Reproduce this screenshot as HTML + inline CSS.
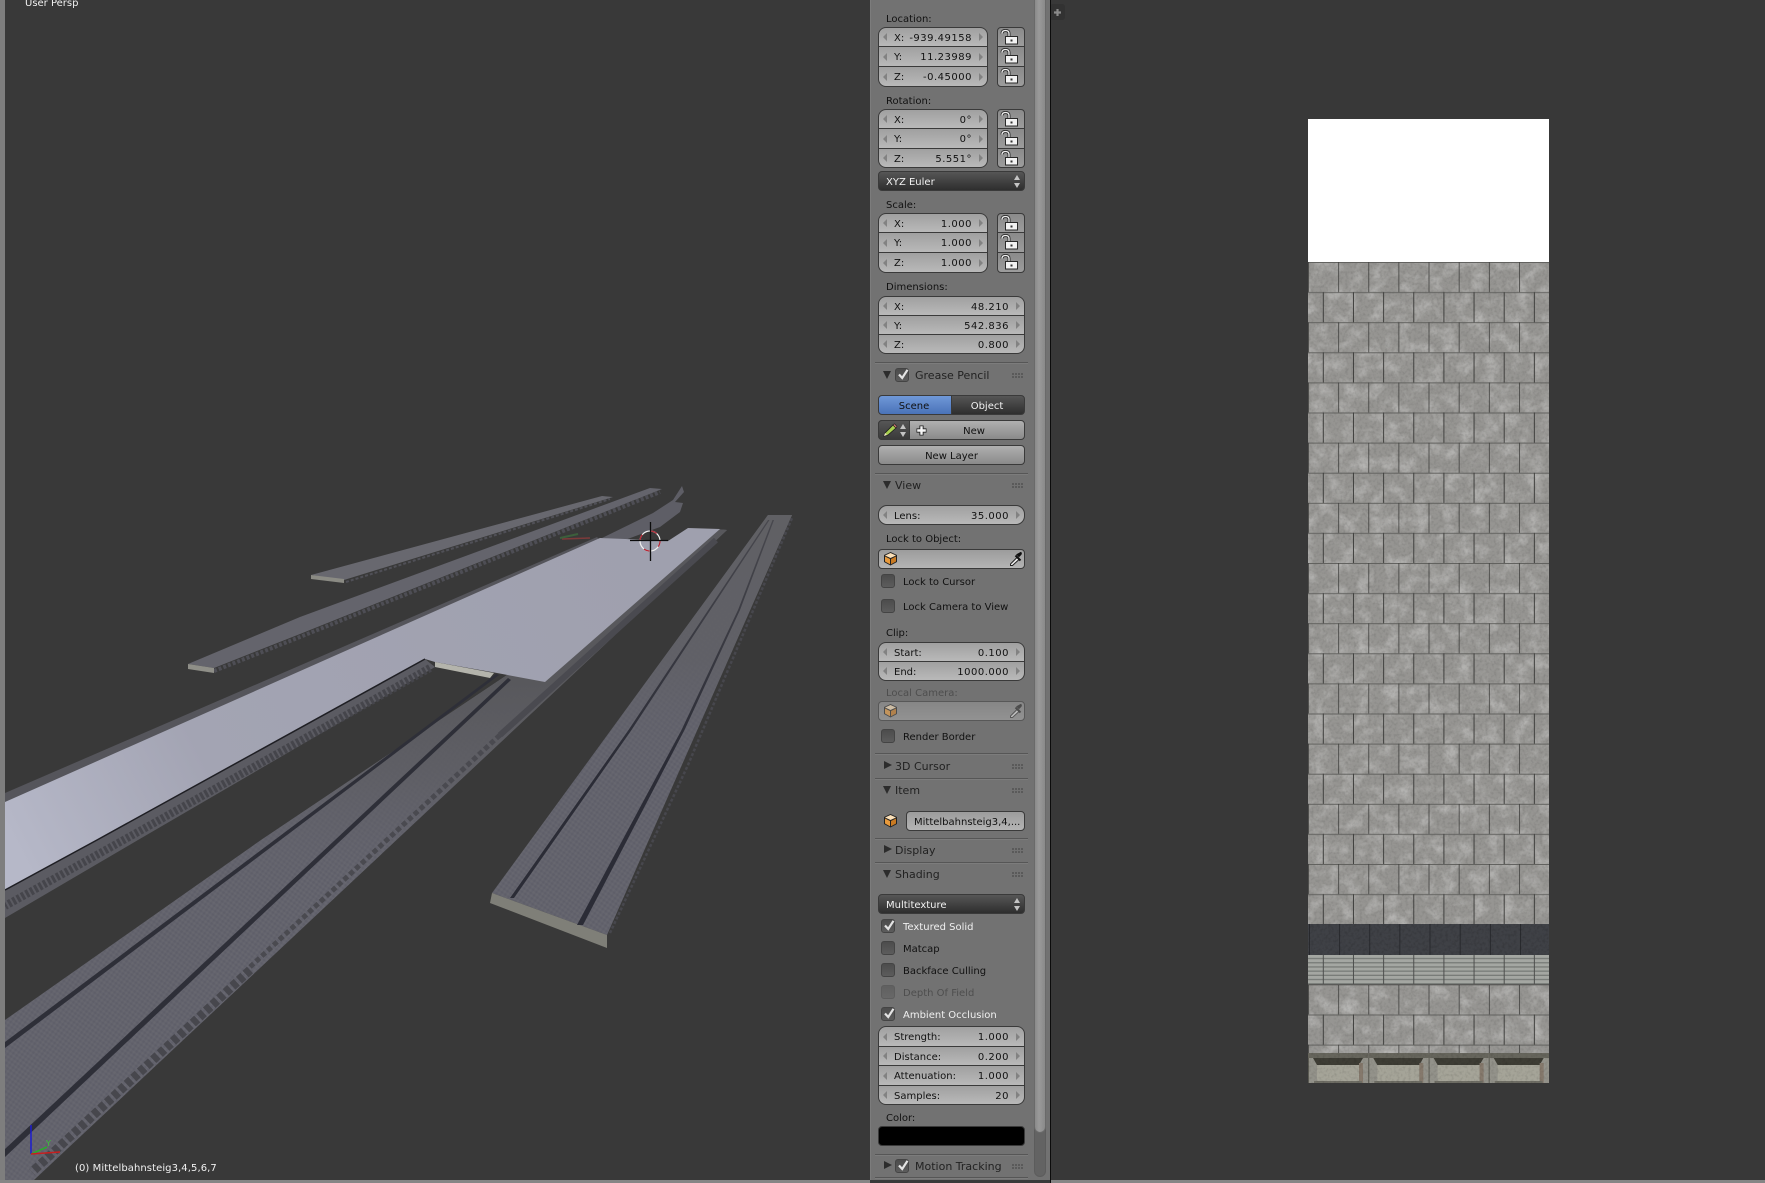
<!DOCTYPE html>
<html><head><meta charset="utf-8"><title>Blender</title>
<style>
html,body{margin:0;padding:0;background:#393939;width:1765px;height:1183px;overflow:hidden}
body{position:relative;font:10px "DejaVu Sans","Liberation Sans",sans-serif;color:#111}
.abs,.f,.l,.h,.c,.cb,.sep,.dots,.tri,.trr,.btn{position:absolute;box-sizing:border-box}
#panel{position:absolute;left:870px;top:0;width:180px;height:1180px;background:#727272;border-left:1px solid #7c7c7c}
.sep{left:875px;width:153px;height:2px;border-top:1px solid #565656;border-bottom:1px solid #7c7c7c}
.f{background:linear-gradient(#a0a0a0,#b9b9b9);border:1px solid #3a3a3a;line-height:18px;white-space:nowrap}
.sm{left:878px;width:110px}.lg{left:878px;width:147px}.lk{left:997px;width:28px;background:linear-gradient(#8a8a8a,#9c9c9c)}
.t{border-radius:8px 8px 0 0}.e{border-radius:0 0 8px 8px}.o{border-radius:9px}.t4{border-radius:4px 4px 0 0}.e4{border-radius:0 0 4px 4px}
.f u{position:absolute;left:15px;top:1.500px;text-decoration:none}
.f em{position:absolute;right:15px;top:1.500px;font-style:normal;letter-spacing:.5px}
.f s{position:absolute;top:50%;margin-top:-4px;border:4px solid transparent;width:0;height:0}
.f s.a{left:4px;border-right-color:#828282;border-left:0}
.f s.b{right:4px;border-left-color:#828282;border-right:0}
.f svg{position:absolute;left:-2px;top:-1px}
.l{left:886px;margin-top:2px;line-height:14px;white-space:nowrap;color:#111}
.h{margin-top:.5px;line-height:14px;font-size:11px;color:#222;white-space:nowrap}
.c{left:903px;margin-top:1px;line-height:14px;color:#111;white-space:nowrap}
.w{color:#f0f0f0}
.cb{left:881px;width:14px;height:14px;border:1px solid #444;border-radius:3px;background:linear-gradient(#4c4c4c,#5c5c5c)}
.cb svg{position:absolute;left:0;top:-1px}
.dots{left:1012px;width:11px;height:6px;background:radial-gradient(circle at 1px 1px,#4a4a4a 0.7px,transparent 1px) 0 0/3px 3px}
.tri{left:883px;width:0;height:0;border-left:4.500px solid transparent;border-right:4.500px solid transparent;border-top:8px solid #2c2c2c}
.trr{left:884px;width:0;height:0;border-top:4.500px solid transparent;border-bottom:4.500px solid transparent;border-left:8px solid #2c2c2c}
.btn{border:1px solid #3a3a3a;border-radius:4px;line-height:21px;text-align:center;white-space:nowrap}
.dark{background:linear-gradient(#565656,#2e2e2e);color:#f2f2f2;text-align:left;padding-left:7px}
.gr{background:linear-gradient(#b0b0b0,#8a8a8a);color:#111}
.fld{background:linear-gradient(#9c9c9c,#b4b4b4)}
.arrs{position:absolute;right:4px;top:3px;width:6px;height:13px}
.arrs:before,.arrs:after{content:"";position:absolute;left:0;border-left:3px solid transparent;border-right:3px solid transparent}
.arrs:before{top:0;border-bottom:5px solid #c4c4c4}.arrs:after{bottom:0;border-top:5px solid #c4c4c4}
</style></head><body>

<svg class="abs" style="left:0;top:0" width="870" height="1183" viewBox="0 0 870 1183">
<defs>
<linearGradient id="plat" gradientUnits="userSpaceOnUse" x1="640" y1="540" x2="20" y2="860"><stop offset="0" stop-color="#9fa0ae"/><stop offset=".7" stop-color="#a3a4b3"/><stop offset="1" stop-color="#b6b8c8"/></linearGradient>
<linearGradient id="fadeB" gradientUnits="userSpaceOnUse" x1="0" y1="680" x2="0" y2="880"><stop offset="0" stop-color="#58585c"/><stop offset=".5" stop-color="#5e5e64" stop-opacity=".8"/><stop offset="1" stop-color="#62626c" stop-opacity="0"/></linearGradient>
<linearGradient id="fadeR" gradientUnits="userSpaceOnUse" x1="0" y1="515" x2="0" y2="760"><stop offset="0" stop-color="#606064"/><stop offset=".6" stop-color="#606066" stop-opacity=".85"/><stop offset="1" stop-color="#62626c" stop-opacity="0"/></linearGradient>
<linearGradient id="lineR" gradientUnits="userSpaceOnUse" x1="0" y1="517" x2="0" y2="760"><stop offset="0" stop-color="#48484e"/><stop offset="1" stop-color="#2b2c36"/></linearGradient>
<pattern id="weave" width="4" height="4" patternUnits="userSpaceOnUse" patternTransform="rotate(35)"><rect width="4" height="4" fill="#63636d"/><rect width="2" height="2" fill="#67676f"/><rect x="2" y="2" width="2" height="2" fill="#5f5f69"/></pattern>
<g id="lk"><path d="M13 10V6.500Q13 3.500 9.500 3.500T6 6.500" fill="none" stroke="#2a2a2a" stroke-width="3"/><path d="M13 10V6.500Q13 3.500 9.500 3.500T6 6.500" fill="none" stroke="#f0f0f0" stroke-width="1.300"/><rect x="9.500" y="9.500" width="12" height="7.500" fill="#f2f2f2" stroke="#2a2a2a"/><rect x="14.500" y="12.500" width="2" height="2" fill="#333"/></g>
<g id="cube"><path d="M6.500 0L13 3V10L6.500 13.500L0 10V3Z" fill="#222"/><path d="M6.500 1L12 3.500L6.500 6L1 3.500Z" fill="#fbe0b8"/><path d="M1 4.500L6 7V12.300L1 9.500Z" fill="#e89a3c"/><path d="M7 7L12 4.500V9.500L7 12.300Z" fill="#c97a22"/></g>
<g id="drop"><path d="M1.500 12L8 5.500L10 7.500L3.500 13.500L1.500 13.500Z" fill="#eee" stroke="#222"/><path d="M8 2.500L10 4.500L12 2.500Q13 .5 11.500 .5L10 1.500Z" fill="#111" stroke="#111"/><path d="M6.500 3.500L11.500 8.500" stroke="#111" stroke-width="2"/></g>
<g id="chk"><path d="M3 6.500L6.200 10L11.500 1.800" fill="none" stroke="#e4e4e4" stroke-width="2.200"/></g>
</defs>

<!-- strip A -->
<polygon points="311,575 602,496 613,497 344,580" fill="#68686f"/>
<line x1="346" y1="582" x2="610" y2="499" stroke="#505057" stroke-width="2" stroke-dasharray="3 2"/>
<polygon points="311,575 344,579 344,583 311,579" fill="#8b8b84"/>
<!-- strip B -->
<polygon points="188,664 300,617 650,488 662,489 300,634 214,668" fill="#64646c"/>
<polyline points="214,671 300,637 660,492" fill="none" stroke="#4e4e55" stroke-width="4" stroke-dasharray="3 2"/>
<polygon points="188,664 214,668 214,673 188,669" fill="#8f8f88"/>
<!-- strip C -->
<polygon points="602,538 653,513 673,500 682,486 684,492 675,502 683,503 680,512 660,527 625,540" fill="#5e5e66"/>
<path d="M562 539L590 538" stroke="#7d3a3a" stroke-width="1.500"/><path d="M560 538L578 534" stroke="#3c5f3c" stroke-width="2"/>
<!-- upper platform edge -->
<polygon points="597,537 5,793 5,804 600,540" fill="#55555b"/>
<!-- central band -->
<polygon points="507,675 261,840 5,1020 5,1180 34,1180 727,530 716,529" fill="url(#weave)"/>
<polygon points="507,675 261,840 5,1020 5,1180 34,1180 727,530 716,529" fill="url(#fadeB)"/>
<line x1="716" y1="540" x2="500" y2="735" stroke="#4a4a50" stroke-width="6"/>
<polyline points="500,735 250,967" fill="none" stroke="#4a4a50" stroke-width="5" stroke-dasharray="5 3"/>
<polyline points="250,970 32,1172" fill="none" stroke="#47474d" stroke-width="9" stroke-dasharray="6 3"/>
<polygon points="496,674 499,675 5,1048 5,1042" fill="#2e2f38"/>
<polygon points="508,678 511,680 5,1157 5,1149" fill="#2e2f38"/>
<!-- left ledge -->
<polygon points="425,659 435,667 138,840 5,918 5,890 97,840" fill="#5b5b62"/>
<polyline points="430,668 138,832 5,906" fill="none" stroke="#45454b" stroke-width="8" stroke-dasharray="3 2"/>
<!-- platform -->
<polygon points="600,538 625,539 668,541 688,528 720,529 545,682 497,673 435,662 425,659 97,840 5,890 5,802" fill="url(#plat)"/>
<polyline points="425,659 97,840 5,890" fill="none" stroke="#1f1f24" stroke-width="1.500"/>
<polygon points="435,662 494,673 490,678 435,667" fill="#b4b4ac"/>
<!-- right strip -->
<polygon points="768,515 792,515 607,935 492,893" fill="url(#weave)"/>
<polygon points="768,515 792,515 684,760 589,760" fill="url(#fadeR)"/>
<polyline points="610,933 688,765 792,518" fill="none" stroke="#47474d" stroke-width="2.500" stroke-dasharray="3 2"/>
<polygon points="492,893 607,935 607,948 490,903" fill="#7f7f78"/>
<polygon points="510,898 628.500,730 768,520 769.500,520 631.500,730 514,898" fill="url(#lineR)"/>
<polygon points="577,925 681.500,730 738,610 772.500,520 774,520 740,610 684.500,730 583,925" fill="url(#lineR)"/>
<!-- cursor -->
<circle cx="650" cy="541" r="10" fill="none" stroke="#f0f0f0" stroke-width="1.200"/>
<circle cx="650" cy="541" r="10" fill="none" stroke="#b8212f" stroke-width="1.200" stroke-dasharray="6 10"/>
<path d="M630 540.500H668M650.500 522V561" stroke="#0c0c0c" stroke-width="1.300"/>
<!-- gizmo -->
<path d="M31 1154V1125" stroke="#1c1cd0" stroke-width="1.500"/>
<path d="M31 1154L47 1147" stroke="#25b325" stroke-width="1.500"/>
<path d="M31 1154L60 1152" stroke="#c81e1e" stroke-width="1.500"/>
<text x="46" y="1146" font-family="DejaVu Sans" font-size="8" fill="#3ac43a">Y</text>
<!-- texts -->
<text x="25" y="6" font-family="DejaVu Sans" font-size="10" fill="#f0f0f0">User Persp</text>
<text x="75" y="1171" font-family="DejaVu Sans" font-size="10" letter-spacing=".08" fill="#f0f0f0">(0) Mittelbahnsteig3,4,5,6,7</text>
<rect x="0" y="0" width="5" height="1183" fill="#7e7e7e"/>
<rect x="0" y="1180" width="870" height="3" fill="#858585"/>
</svg>

<!-- panel -->
<div id="panel"></div>
<div class="abs" style="left:1034px;top:-10px;width:12px;height:1187px;border-radius:6px;background:#636363;border:1px solid #5c5c5c;box-sizing:border-box"></div>
<div class="abs" style="left:1034px;top:-10px;width:12px;height:1143px;border-radius:6px;background:linear-gradient(90deg,#8a8a8a,#9a9a9a 40%,#8a8a8a);border:1px solid #6a6a6a;box-sizing:border-box"></div>
<div class="abs" style="left:1050px;top:0;width:1px;height:1183px;background:#0c0c0c"></div>
<div class="abs" style="left:870px;top:1180px;width:180px;height:3px;background:#3a3a3a"></div>

<div class="l" style="top:11px">Location:</div>
<div class="f sm t" style="top:27px;height:20px"><s class="a"></s><s class="b"></s><u>X:</u><em>-939.49158</em></div>
<div class="f sm" style="top:46px;height:21px"><s class="a"></s><s class="b"></s><u>Y:</u><em>11.23989</em></div>
<div class="f sm e" style="top:66px;height:21px"><s class="a"></s><s class="b"></s><u>Z:</u><em>-0.45000</em></div>
<div class="f lk t4" style="top:27px;height:20px"><svg width="28" height="20"><use href="#lk"/></svg></div>
<div class="f lk" style="top:46px;height:21px"><svg width="28" height="20"><use href="#lk"/></svg></div>
<div class="f lk e4" style="top:66px;height:21px"><svg width="28" height="20"><use href="#lk"/></svg></div>

<div class="l" style="top:93px">Rotation:</div>
<div class="f sm t" style="top:109px;height:20px"><s class="a"></s><s class="b"></s><u>X:</u><em>0°</em></div>
<div class="f sm" style="top:128px;height:21px"><s class="a"></s><s class="b"></s><u>Y:</u><em>0°</em></div>
<div class="f sm e" style="top:148px;height:20px"><s class="a"></s><s class="b"></s><u>Z:</u><em>5.551°</em></div>
<div class="f lk t4" style="top:109px;height:20px"><svg width="28" height="20"><use href="#lk"/></svg></div>
<div class="f lk" style="top:128px;height:21px"><svg width="28" height="20"><use href="#lk"/></svg></div>
<div class="f lk e4" style="top:148px;height:20px"><svg width="28" height="20"><use href="#lk"/></svg></div>

<div class="btn dark lg" style="top:171px;height:20px">XYZ Euler<span class="arrs"></span></div>

<div class="l" style="top:197px">Scale:</div>
<div class="f sm t" style="top:213px;height:20px"><s class="a"></s><s class="b"></s><u>X:</u><em>1.000</em></div>
<div class="f sm" style="top:232px;height:21px"><s class="a"></s><s class="b"></s><u>Y:</u><em>1.000</em></div>
<div class="f sm e" style="top:252px;height:21px"><s class="a"></s><s class="b"></s><u>Z:</u><em>1.000</em></div>
<div class="f lk t4" style="top:213px;height:20px"><svg width="28" height="20"><use href="#lk"/></svg></div>
<div class="f lk" style="top:232px;height:21px"><svg width="28" height="20"><use href="#lk"/></svg></div>
<div class="f lk e4" style="top:252px;height:21px"><svg width="28" height="20"><use href="#lk"/></svg></div>

<div class="l" style="top:279px">Dimensions:</div>
<div class="f lg t" style="top:296px;height:20px"><s class="a"></s><s class="b"></s><u>X:</u><em>48.210</em></div>
<div class="f lg" style="top:315px;height:20px"><s class="a"></s><s class="b"></s><u>Y:</u><em>542.836</em></div>
<div class="f lg e" style="top:334px;height:20px"><s class="a"></s><s class="b"></s><u>Z:</u><em>0.800</em></div>

<div class="sep" style="top:362px"></div>
<div class="tri" style="top:371px"></div>
<div class="cb" style="left:895px;top:368px"><svg width="14" height="14"><use href="#chk"/></svg></div>
<div class="h" style="left:915px;top:368px">Grease Pencil</div>
<div class="dots" style="top:373px"></div>

<div class="btn" style="left:878px;top:395px;width:74px;height:20px;border-radius:4px 0 0 4px;background:linear-gradient(#6f98d8,#4a73b8);color:#111;padding-right:2px">Scene</div>
<div class="btn" style="left:951px;top:395px;width:74px;height:20px;border-radius:0 4px 4px 0;background:linear-gradient(#565656,#2e2e2e);color:#f2f2f2;padding-right:2px">Object</div>

<div class="btn gr" style="left:878px;top:420px;width:147px;height:20px;padding-left:45px">New</div>
<div class="abs" style="left:878px;top:420px;width:32px;height:20px;border:1px solid #3a3a3a;border-radius:4px 0 0 4px;background:linear-gradient(#565656,#3a3a3a);box-sizing:border-box"><span class="arrs" style="right:3px"></span></div>
<svg class="abs" style="left:883px;top:423px" width="15" height="15"><path d="M1 13L2 10L10 2L13 5L5 12Z" fill="#a8d050" stroke="#1d1d1d" stroke-width=".8"/><path d="M10 2L11.500 .8L14 3.500L13 5Z" fill="#d97a7a" stroke="#1d1d1d" stroke-width=".6"/><path d="M1 13L2 10L4 12Z" fill="#f3e6c4"/></svg>
<svg class="abs" style="left:915px;top:424px" width="13" height="13"><path d="M6.500 1.500V11.500M1.500 6.500H11.500" stroke="#222" stroke-width="4.200"/><path d="M6.500 2.200V10.800M2.200 6.500H10.800" stroke="#f6f6f6" stroke-width="2.400"/></svg>

<div class="btn gr" style="left:878px;top:445px;width:147px;height:20px">New Layer</div>

<div class="sep" style="top:473px"></div>
<div class="tri" style="top:481px"></div>
<div class="h" style="left:895px;top:478px">View</div>
<div class="dots" style="top:483px"></div>

<div class="f lg o" style="top:505px;height:20px"><s class="a"></s><s class="b"></s><u>Lens:</u><em>35.000</em></div>
<div class="l" style="top:531px">Lock to Object:</div>
<div class="btn fld" style="left:878px;top:549px;width:147px;height:20px"></div>
<svg class="abs" style="left:884px;top:552px" width="14" height="15"><use href="#cube"/></svg>
<svg class="abs" style="left:1009px;top:552px" width="14" height="15"><use href="#drop"/></svg>

<div class="cb" style="top:574px"></div><div class="c" style="top:575px">Lock to Cursor</div>
<div class="cb" style="top:599px"></div><div class="c" style="top:600px">Lock Camera to View</div>

<div class="l" style="top:625px">Clip:</div>
<div class="f lg t" style="top:642px;height:20px"><s class="a"></s><s class="b"></s><u>Start:</u><em>0.100</em></div>
<div class="f lg e" style="top:661px;height:20px"><s class="a"></s><s class="b"></s><u>End:</u><em>1000.000</em></div>

<div class="l" style="top:685px;color:#4e4e4e">Local Camera:</div>
<div class="btn" style="left:878px;top:701px;width:147px;height:20px;background:linear-gradient(#868686,#929292);border-color:#585858"></div>
<svg class="abs" style="left:884px;top:704px;opacity:.6" width="14" height="15"><use href="#cube"/></svg>
<svg class="abs" style="left:1009px;top:704px;opacity:.5" width="14" height="15"><use href="#drop"/></svg>

<div class="cb" style="top:729px"></div><div class="c" style="top:730px">Render Border</div>

<div class="sep" style="top:753px"></div>
<div class="trr" style="top:761px"></div>
<div class="h" style="left:895px;top:759px">3D Cursor</div>
<div class="dots" style="top:764px"></div>

<div class="sep" style="top:778px"></div>
<div class="tri" style="top:786px"></div>
<div class="h" style="left:895px;top:783px">Item</div>
<div class="dots" style="top:788px"></div>
<svg class="abs" style="left:884px;top:814px" width="14" height="15"><use href="#cube"/></svg>
<div class="btn fld" style="left:906px;top:811px;width:119px;height:20px;text-align:left;padding-left:7px;overflow:hidden">Mittelbahnsteig3,4,...</div>

<div class="sep" style="top:838px"></div>
<div class="trr" style="top:845px"></div>
<div class="h" style="left:895px;top:843px">Display</div>
<div class="dots" style="top:848px"></div>

<div class="sep" style="top:862px"></div>
<div class="tri" style="top:870px"></div>
<div class="h" style="left:895px;top:867px">Shading</div>
<div class="dots" style="top:872px"></div>

<div class="btn dark lg" style="top:894px;height:20px">Multitexture<span class="arrs"></span></div>

<div class="cb" style="top:919px"><svg width="14" height="14"><use href="#chk"/></svg></div><div class="c w" style="top:920px">Textured Solid</div>
<div class="cb" style="top:941px"></div><div class="c" style="top:942px">Matcap</div>
<div class="cb" style="top:963px"></div><div class="c" style="top:964px">Backface Culling</div>
<div class="cb" style="top:985px;opacity:.45"></div><div class="c" style="top:986px;color:#4e4e4e">Depth Of Field</div>
<div class="cb" style="top:1007px"><svg width="14" height="14"><use href="#chk"/></svg></div><div class="c w" style="top:1008px">Ambient Occlusion</div>

<div class="f lg t" style="top:1026px;height:21px"><s class="a"></s><s class="b"></s><u>Strength:</u><em>1.000</em></div>
<div class="f lg" style="top:1046px;height:20px"><s class="a"></s><s class="b"></s><u>Distance:</u><em>0.200</em></div>
<div class="f lg" style="top:1065px;height:21px"><s class="a"></s><s class="b"></s><u>Attenuation:</u><em>1.000</em></div>
<div class="f lg e" style="top:1085px;height:20px"><s class="a"></s><s class="b"></s><u>Samples:</u><em>20</em></div>

<div class="l" style="top:1110px">Color:</div>
<div class="btn" style="left:878px;top:1126px;width:147px;height:20px;background:#000"></div>

<div class="sep" style="top:1154px"></div>
<div class="trr" style="top:1161px"></div>
<div class="cb" style="left:895px;top:1159px"><svg width="14" height="14"><use href="#chk"/></svg></div>
<div class="h" style="left:915px;top:1159px">Motion Tracking</div>
<div class="dots" style="top:1164px"></div>
<div class="sep" style="top:1177px"></div>

<!-- right area -->
<svg class="abs" style="left:1051px;top:0" width="714" height="1183" viewBox="1051 0 714 1183">
<defs>
<pattern id="joint" x="1308" y="262" width="30.150" height="60.200" patternUnits="userSpaceOnUse">
<path d="M0 .5H30.150M0 30.600H30.150" stroke="#62625f" stroke-width="1"/>
<path d="M.3 0V30.100M15.300 30.100V60.200" stroke="#3f3f3d" stroke-width="1"/>
</pattern>
<pattern id="jointV" x="1308" y="0" width="30.150" height="10" patternUnits="userSpaceOnUse"><path d="M15.300 0V10" stroke="#4c4e4c" stroke-width="1"/></pattern>
<pattern id="jointD" x="1309" y="0" width="30.150" height="10" patternUnits="userSpaceOnUse"><path d="M.3 0V10" stroke="#222327" stroke-width="1"/></pattern>
<pattern id="stripes" x="0" y="955" width="4" height="4.200" patternUnits="userSpaceOnUse"><rect width="4" height="4.200" fill="#a4a7a2"/><rect y="2.900" width="4" height="1.300" fill="#787b77"/></pattern>
<filter id="n" x="0" y="0" width="1" height="1"><feTurbulence type="fractalNoise" baseFrequency=".07" numOctaves="4" seed="5"/><feColorMatrix values="0 0 0 0 1 0 0 0 0 1 0 0 0 0 1 2.200 0 0 0 -.95"/></filter>
<filter id="nd" x="0" y="0" width="1" height="1"><feTurbulence type="fractalNoise" baseFrequency=".35" numOctaves="2" seed="9"/><feColorMatrix values="0 0 0 0 0 0 0 0 0 0 0 0 0 0 0 1.600 0 0 0 -.7"/></filter>
<g id="seg"><rect width="60.300" height="30" fill="#93928a"/><rect width="60.300" height="5" fill="#66655c"/><polygon points="5,5 55,5 51,12 9,12" fill="#3e3d35"/><rect x="9" y="12" width="42" height="18" fill="#a5a498"/><rect x="51" y="10" width="4" height="20" fill="#85796c"/><rect x="0" y="5" width="1" height="25" fill="#5c5c54"/><rect x="6" y="28" width="48" height="2" fill="#6e6d64"/></g>
</defs>
<rect x="1051" y="0" width="714" height="1183" fill="#383838"/>
<rect x="1051" y="1180" width="714" height="3" fill="#858585"/>
<rect x="1050" y="4" width="15" height="16" rx="3" fill="#323232"/>
<path d="M1057.500 9V16M1054 12.500H1061" stroke="#8a8a8a" stroke-width="2.200"/>
<rect x="1308" y="119" width="241" height="143" fill="#fff"/>
<rect x="1308" y="262" width="241" height="791" fill="#969592"/>
<rect x="1308" y="262" width="241" height="791" filter="url(#n)" opacity=".3"/>
<rect x="1308" y="262" width="241" height="791" filter="url(#nd)" opacity=".14"/>
<rect x="1308" y="262" width="241" height="791" fill="url(#joint)"/>
<rect x="1308" y="924" width="241" height="31" fill="#3f4146"/>
<rect x="1308" y="924" width="241" height="31" filter="url(#nd)" opacity=".2"/>
<rect x="1308" y="924" width="241" height="31" fill="url(#jointD)"/>
<rect x="1308" y="955" width="241" height="29" fill="url(#stripes)"/>
<rect x="1308" y="955" width="241" height="29" fill="url(#jointV)"/>
<rect x="1308" y="984" width="241" height="1" fill="#5a5a58"/>
<use href="#seg" x="1308" y="1053"/><use href="#seg" x="1368.300" y="1053"/><use href="#seg" x="1428.600" y="1053"/><use href="#seg" x="1488.700" y="1053"/>
<rect x="1308" y="1053" width="241" height="30" filter="url(#nd)" opacity=".15"/>
</svg>
</body></html>
